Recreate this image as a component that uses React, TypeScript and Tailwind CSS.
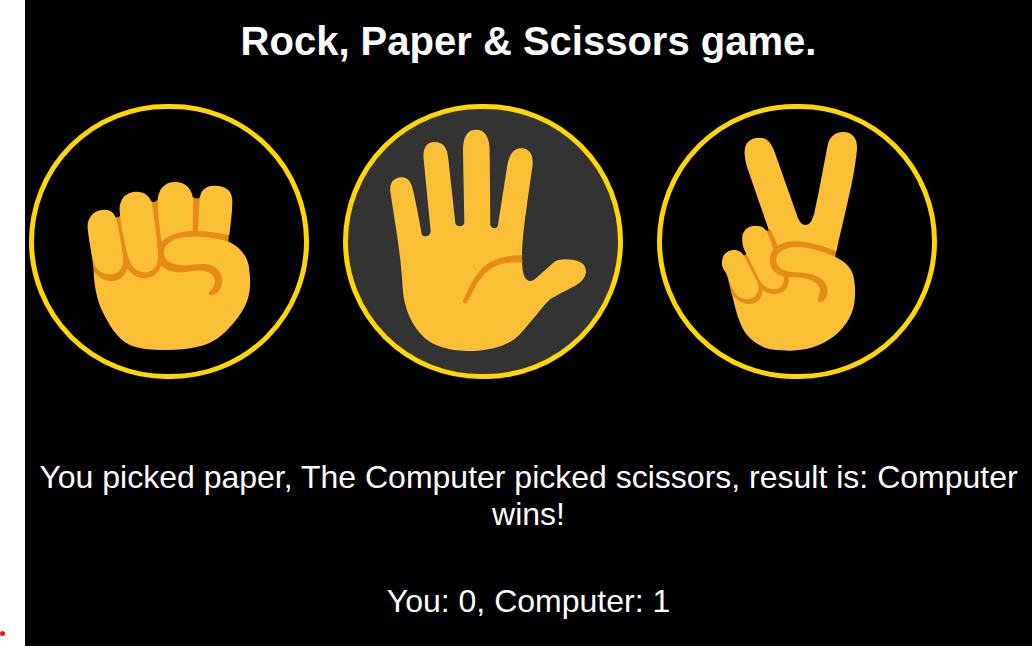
import { useState } from "react";
import type { ReactNode } from "react";

type Choice = "rock" | "paper" | "scissors";

const SKIN = "#fbc036";
const CREASE = "#e58c16";

function RockIcon() {
  return (
    <svg viewBox="-108 -168 810 795" className="block h-full w-full" aria-hidden="true">
      <path
        fill={CREASE}
        d="M60 235 L72 325 L90 350 L400 405 L470 400 L480 330 L475 232 L477 200 L440 90 L390 97 Q386 101 380 100 Q374 101 369 96 L300 90 L263 104 Q258 110 252 111 Q247 111 243 107 L190 100 L150 152 Q146 157 143 157 L137 157 L90 160 Z"
      />
      <path
        fill={SKIN}
        d="M71 318 C87 341 108 349 130 348 C151 346 166 332 172 310 C186 333 207 342 231 339 C254 336 269 320 273 301 C286 316 310 323 336 322 C366 321 389 313 408 319 C431 326 440 345 432 362 C427 375 412 383 416 388 C420 392 431 391 439 385 C453 375 458 357 456 341 C453 317 435 301 410 298 C383 295 355 303 328 300 C299 297 282 285 282 262 C282 237 309 220 345 216 C389 211 435 218 477 230 C512 247 533 275 537 307 C543 350 543 390 522 429 C503 463 474 497 443 520 C410 544 360 555 292 555 C242 555 206 551 178 539 C143 523 116 479 97 439 C80 403 72 358 71 318 Z"
      />
      <path
        fill={SKIN}
        d="M53 190 C50 157 72 135 101 134 C124 133 135 146 141 170 C149 208 157 250 159 282 C161 309 145 328 124 328 C99 329 79 316 72 293 C64 266 56 223 53 190 Z"
      />
      <path
        fill={SKIN}
        d="M149 139 C146 104 166 82 196 80 C222 79 241 91 246 119 C255 168 262 228 264 276 C265 303 250 321 226 322 C201 322 183 306 176 280 C164 237 153 186 149 139 Z"
      />
      <path
        fill={SKIN}
        d="M263 110 C263 73 284 51 315 51 C347 51 369 72 369 108 L368 197 C327 199 296 210 274 230 C269 187 264 149 263 110 Z"
      />
      <path
        fill={SKIN}
        d="M389 103 C391 77 405 63 430 62 C468 61 488 77 487 110 C487 142 481 178 478 211 C445 203 415 199 384 198 C386 164 387 132 389 103 Z"
      />
    </svg>
  );
}

function PaperIcon() {
  return (
    <svg viewBox="-66 -18 810 795" className="block h-full w-full" aria-hidden="true">
      <path
        fill={SKIN}
        d="M61 231 C58 203 70 188 95 187 C115 187 124 203 129 225 C139 267 147 313 155 356 C157 367 179 367 182 350 L161 133 C158 101 168 82 194 81 C222 81 232 101 235 133 L256 325 C259 337 280 337 283 324 L279 107 C279 66 291 44 319 44 C346 44 359 68 359 107 L361 330 C363 342 382 344 384 329 L412 151 C418 117 432 99 454 100 C479 101 490 119 488 149 L472 261 C463 327 456 377 456 431 C456 475 464 498 482 498 C490 498 496 491 502 486 L550 443 C563 432 584 431 606 434 C634 438 649 450 648 470 C647 487 634 502 613 514 C582 531 553 544 539 554 C523 568 506 592 489 612 C470 634 452 658 434 672 C400 697 345 709 290 708 C235 707 192 693 165 670 C128 637 102 583 98 520 C93 419 75 325 61 231 Z"
      />
      <path
        fill={CREASE}
        d="M456 421 C405 420 360 433 333 463 C308 492 293 526 280 555 C278 562 281 567 288 565 C298 557 306 531 319 511 C339 474 369 451 405 445 C423 442 440 443 457 443 Z"
      />
    </svg>
  );
}

function ScissorsIcon() {
  return (
    <svg viewBox="-114 -18 810 795" className="block h-full w-full" aria-hidden="true">
      <path
        fill={CREASE}
        d="M80 475 L94 535 L130 580 L390 575 L406 425 L409 400 L290 360 L225 360 L212 346 L198 347 L180 390 L140 416 L134 421 L128 421 L100 440 Z"
      />
      <path
        fill={SKIN}
        d="M94 530 C106 555 126 567 149 567 C175 566 187 548 187 525 C202 536 220 540 239 535 C259 528 268 509 267 486 C294 486 322 488 341 500 C361 511 362 524 358 537 C354 548 350 558 358 561 C367 562 376 555 380 544 C388 520 378 499 355 486 C329 471 299 473 270 470 C244 466 228 452 228 435 C229 413 253 398 285 396 C320 394 365 408 407 426 C437 441 457 461 461 487 C467 517 467 554 459 583 C448 622 415 661 374 682 C342 700 305 707 268 707 C240 707 220 706 200 700 C162 687 134 660 121 625 C109 596 102 562 94 530 Z"
      />
      <path
        fill={SKIN}
        d="M66 449 C64 424 77 406 100 405 C118 404 128 414 134 427 L171 499 C181 521 173 540 157 549 C138 558 114 549 103 532 C92 514 88 492 78 474 C73 465 67 458 66 449 Z"
      />
      <path
        fill={SKIN}
        d="M127 380 C123 350 141 332 166 332 C184 332 195 338 202 352 L220 403 C210 416 207 431 211 449 C216 468 232 478 252 486 C253 506 245 519 230 522 C208 525 188 514 177 493 L139 416 C133 405 128 395 127 380 Z"
      />
      <path
        fill={SKIN}
        d="M134 119 C131 85 148 69 177 68 C201 68 214 83 223 109 L292 304 C298 320 304 330 316 330 C330 330 336 317 342 298 C357 231 370 157 382 95 C387 67 402 52 430 51 C459 51 473 72 471 103 C466 158 453 219 440 274 C430 321 418 365 409 410 C365 391 326 380 288 379 C263 378 246 384 233 392 L213 347 L206 344 L146 170 C139 150 136 139 134 119 Z"
      />
    </svg>
  );
}

const choices: { id: Choice; icon: ReactNode }[] = [
  { id: "rock", icon: <RockIcon /> },
  { id: "paper", icon: <PaperIcon /> },
  { id: "scissors", icon: <ScissorsIcon /> },
];

const beats: Record<Choice, Choice> = {
  rock: "scissors",
  paper: "rock",
  scissors: "paper",
};

export default function App() {
  const [round, setRound] = useState<{ you: Choice; computer: Choice }>({
    you: "paper",
    computer: "scissors",
  });
  const [score, setScore] = useState({ you: 0, computer: 1 });

  const play = (you: Choice) => {
    const computer = choices[Math.floor(Math.random() * choices.length)].id;
    setRound({ you, computer });
    if (beats[you] === computer) setScore((s) => ({ ...s, you: s.you + 1 }));
    if (beats[computer] === you) setScore((s) => ({ ...s, computer: s.computer + 1 }));
  };

  const result =
    round.you === round.computer
      ? "It's a tie!"
      : beats[round.you] === round.computer
        ? "You win!"
        : "Computer wins!";

  return (
    <div className="flex min-h-screen bg-white font-['Liberation_Sans',Arial,sans-serif]">
      <div className="flex w-[25px] shrink-0 items-end pb-2.5">
        <span className="size-[5px] rounded-full bg-[#ed1c24]" />
      </div>
      <main className="min-w-0 flex-1 bg-black pt-[18px] pb-6 text-center text-white">
        <h1 className="text-[40px] leading-[46px] font-bold">Rock, Paper &amp; Scissors game.</h1>
        <div className="mt-10 flex flex-wrap gap-[34px] pl-1">
          {choices.map(({ id, icon }) => (
            <button
              key={id}
              type="button"
              aria-label={id}
              onClick={() => play(id)}
              className={`h-[275px] w-[280px] cursor-pointer rounded-full border-5 border-[#ffd700] ${
                round.you === id ? "bg-[#333333]" : "bg-black"
              }`}
            >
              {icon}
            </button>
          ))}
        </div>
        <p className="mt-20 text-[32px] leading-[37px]">
          {`You picked ${round.you}, The Computer picked ${round.computer}, result is: ${result}`}
        </p>
        <p className="mt-[50px] text-[32px] leading-[37px]">
          {`You: ${score.you}, Computer: ${score.computer}`}
        </p>
      </main>
    </div>
  );
}
